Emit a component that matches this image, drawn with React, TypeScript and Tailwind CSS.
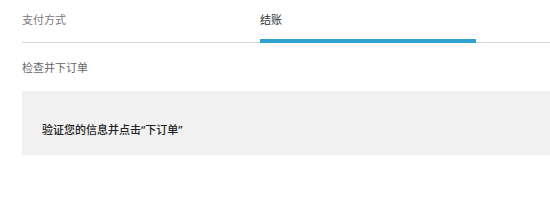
export default function App() {
  return (
    <div
      className="w-[550px] h-[206px] bg-white pl-[22px] text-[11px] leading-[15px]"
      style={{ fontFamily: '"Noto Sans", "Noto Sans CJK SC", sans-serif' }}
    >
      <div className="flex border-b border-[#d6d6d6]">
        <div className="w-[238px] h-[42px] pt-[12px] text-[#7a7a7a]">支付方式</div>
        <div className="w-[216px] h-[43px] -mb-px pt-[12px] text-[#333] border-b-[4px] border-[#2ea3cf]">
          结账
        </div>
      </div>

      <div className="mt-[17px] text-[#666]">检查并下订单</div>

      <div className="mt-[16px] h-[64px] bg-[#f1f1f1] pl-[20px] pt-[31px] font-medium text-[#222]">
        验证您的信息并点击“下订单”
      </div>
    </div>
  )
}
